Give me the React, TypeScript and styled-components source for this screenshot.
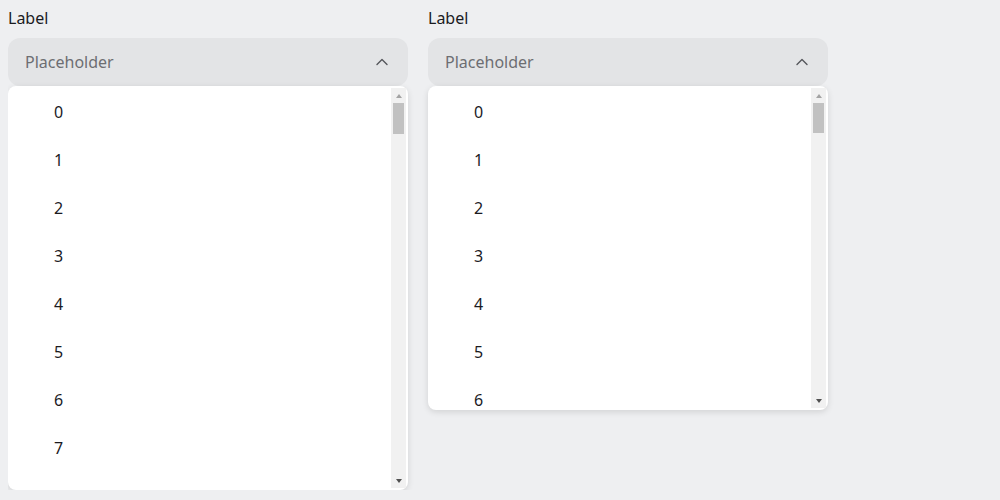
import React from "react";
import styled, { createGlobalStyle } from "styled-components";

const Global = createGlobalStyle`
  html, body { background: #eeeff1; }
  body {
    margin: 8px;
    font-family: "Noto Sans", "Open Sans", sans-serif;
    color: #1b1b1f;
  }
`;

const Row = styled.div`
  display: flex;
  gap: 20px;
  align-items: flex-start;
`;

const Field = styled.div`
  width: 400px;
  display: flex;
  flex-direction: column;
`;

const Label = styled.div`
  font-size: 16px;
  line-height: 20px;
  margin-bottom: 10px;
  color: #1b1b1f;
`;

const Trigger = styled.button`
  height: 48px;
  border: none;
  border-radius: 12px;
  background: #e3e4e6;
  display: flex;
  align-items: center;
  justify-content: space-between;
  padding: 0 16px 0 17px;
  font-family: inherit;
  font-size: 16px;
  color: #6d6e72;
  cursor: pointer;
`;

const Chevron = styled.span`
  width: 20px;
  height: 20px;
  display: flex;
  align-items: center;
  justify-content: center;
  color: #55575c;
`;

const Panel = styled.div`
  background: #ffffff;
  border-radius: 8px;
  padding: 2px;
  display: flex;
  box-shadow: 0 2px 6px rgba(0, 0, 0, 0.12);
`;

const List = styled.ul<{ $h: number }>`
  list-style: none;
  margin: 0;
  padding: 0;
  flex: 1;
  height: ${(p) => p.$h}px;
  overflow: hidden;
`;

const Item = styled.li`
  height: 48px;
  display: flex;
  align-items: center;
  padding: 0 44px;
  font-size: 16px;
  color: #1b1b1f;
`;

const ScrollBar = styled.div`
  width: 15px;
  background: #f1f1f1;
  display: flex;
  flex-direction: column;
`;

const ArrowButton = styled.div<{ $dir: "up" | "down" }>`
  height: 15px;
  display: flex;
  align-items: center;
  justify-content: center;
  &::after {
    content: "";
    width: 0;
    height: 0;
    border-left: 3.5px solid transparent;
    border-right: 3.5px solid transparent;
    ${(p) =>
      p.$dir === "up"
        ? "border-bottom: 4px solid #a3a3a3;"
        : "border-top: 4px solid #505050;"}
  }
`;

const Track = styled.div`
  flex: 1;
  padding: 0 2px;
`;

const Thumb = styled.div<{ $h: number }>`
  height: ${(p) => p.$h}px;
  background: #c1c1c1;
`;

function Select({ height, count, thumb }: { height: number; count: number; thumb: number }) {
  const items = Array.from({ length: count }, (_, i) => i);
  return (
    <Field>
      <Label>Label</Label>
      <Trigger>
        <span>Placeholder</span>
        <Chevron>
          <svg width="12" height="8" viewBox="0 0 12 8" fill="none">
            <path d="M1 6.5 L6 1.5 L11 6.5" stroke="currentColor" strokeWidth="1.4" strokeLinecap="round" strokeLinejoin="round" />
          </svg>
        </Chevron>
      </Trigger>
      <Panel>
        <List $h={height}>
          {items.map((i) => (
            <Item key={i}>{i}</Item>
          ))}
        </List>
        <ScrollBar>
          <ArrowButton $dir="up" />
          <Track>
            <Thumb $h={thumb} />
          </Track>
          <ArrowButton $dir="down" />
        </ScrollBar>
        <Spacer />
      </Panel>
    </Field>
  );
}

const Spacer = styled.div`
  width: 0;
`;

export default function App() {
  return (
    <>
      <Global />
      <Row>
        <Select height={400} count={8} thumb={31} />
        <Select height={320} count={7} thumb={30} />
      </Row>
    </>
  );
}
